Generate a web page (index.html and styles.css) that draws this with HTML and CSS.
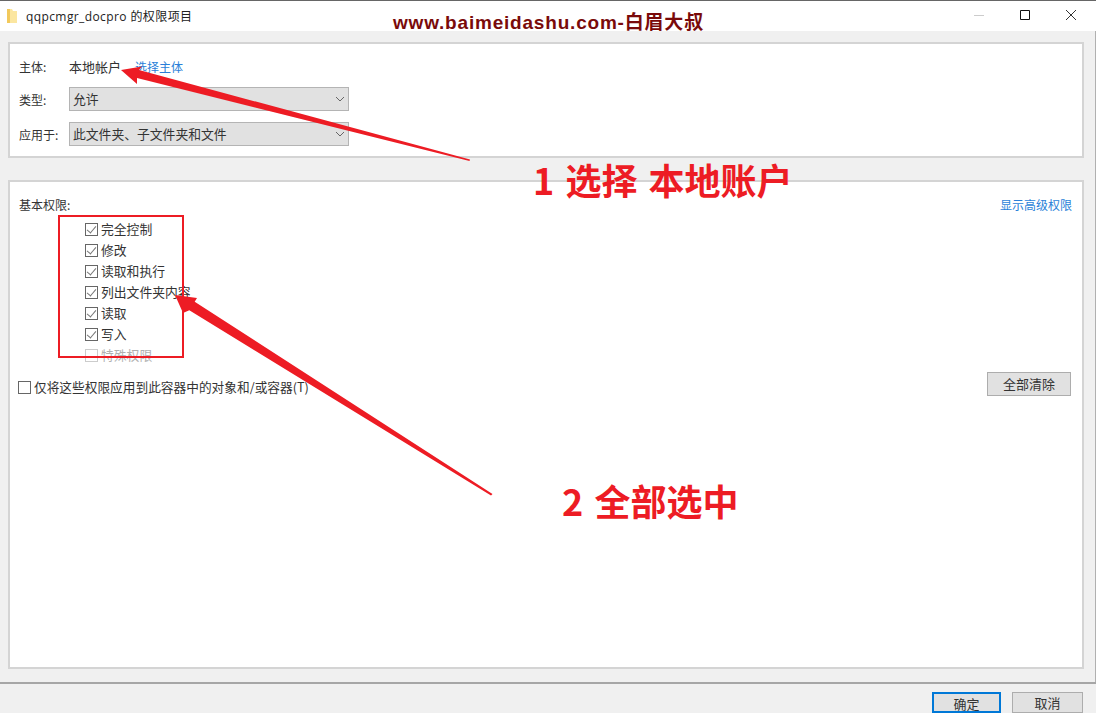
FILE: index.html
```html
<!DOCTYPE html>
<html lang="zh-CN">
<head>
  <meta charset="UTF-8" />
  <title>qqpcmgr_docpro 的权限项目</title>
  <link rel="stylesheet" href="styles.css">
</head>
<body>
  <div class="titlebar">
    <svg class="folder-icon" width="10" height="14" viewBox="0 0 10 14">
      <path d="M0 0h5l1 2h4v12H0z" fill="#fbe6a0"/>
      <path d="M0 0h3v14H0z" fill="#f2c95c"/>
    </svg>
    <span class="title-text">qqpcmgr_docpro 的权限项目</span>
    <div class="window-controls">
      <svg width="46" height="30" viewBox="0 0 46 30"><path d="M18 14.500h10" stroke="#ccc" fill="none"/></svg>
      <svg width="46" height="30" viewBox="0 0 46 30"><path d="M18.500 9.500h9v9h-9z" stroke="#111" fill="none"/></svg>
      <svg width="46" height="30" viewBox="0 0 46 30"><path d="M18 9l10 10M28 9L18 19" stroke="#333" fill="none"/></svg>
    </div>
  </div>

  <div class="main">
    <div class="panel panel-top">
      <div class="field-row field-row-first">
        <span class="field-label">主体:</span>
        <span class="principal">本地帐户</span>
        <a class="link">选择主体</a>
      </div>
      <div class="field-row">
        <span class="field-label">类型:</span>
        <div class="select"><span class="select-value">允许</span><svg class="chevron" width="10" height="6" viewBox="0 0 10 6"><path d="M1 1l4 4 4-4" stroke="#666" fill="none"/></svg></div>
      </div>
      <div class="field-row">
        <span class="field-label">应用于:</span>
        <div class="select"><span class="select-value">此文件夹、子文件夹和文件</span><svg class="chevron" width="10" height="6" viewBox="0 0 10 6"><path d="M1 1l4 4 4-4" stroke="#666" fill="none"/></svg></div>
      </div>
    </div>

    <div class="panel panel-perms">
      <div class="perm-head">
        <span>基本权限:</span>
        <a class="link">显示高级权限</a>
      </div>
      <ul class="perm-list">
        <li><span class="box checked"></span>完全控制</li>
        <li><span class="box checked"></span>修改</li>
        <li><span class="box checked"></span>读取和执行</li>
        <li><span class="box checked"></span>列出文件夹内容</li>
        <li><span class="box checked"></span>读取</li>
        <li><span class="box checked"></span>写入</li>
        <li class="disabled"><span class="box"></span>特殊权限</li>
      </ul>
      <div class="perm-foot">
        <label class="apply-only"><span class="box"></span>仅将这些权限应用到此容器中的对象和/或容器(T)</label>
        <button class="btn btn-clear">全部清除</button>
      </div>
    </div>
  </div>

  <div class="footer">
    <button class="btn btn-ok">确定</button>
    <button class="btn btn-cancel">取消</button>
  </div>

  <!-- annotations drawn on top of the dialog -->
  <div class="watermark">www.baimeidashu.com-白眉大叔</div>
  <div class="red-box"></div>
  <svg class="arrows" width="1096" height="713" viewBox="0 0 1096 713">
    <path d="M121 70L142 66.500 139 70 470 159.500 469.500 161 137 78 137 84z" fill="#ed1c24"/>
    <path d="M175 295L197 298 194.700 301.800 492.500 494 491 495.500 189.300 310.200 183 313z" fill="#ed1c24"/>
  </svg>
  <div class="note note-one">1 选择 本地账户</div>
  <div class="note note-two">2 全部选中</div>
</body>
</html>
```

FILE: styles.css
```css
* {
  box-sizing: border-box;
}
body {
  margin: 0;
  width: 1096px;
  height: 713px;
  overflow: hidden;
  position: relative;
  display: flex;
  flex-direction: column;
  background-color: #f0f0f0;
  color: #333;
  font-family: "Noto Sans CJK SC", "Noto Sans", sans-serif;
  font-size: 12px;
}
.titlebar {
  height: 31px;
  flex-shrink: 0;
  display: flex;
  align-items: center;
  background-color: #fff;
  border-top: 1px solid #666;
  padding-left: 7px;
}
.folder-icon {
  margin-right: 9px;
}
.title-text {
  font-family: "Open Sans", "Noto Sans CJK SC", sans-serif;
  font-size: 12px;
  letter-spacing: 0.4px;
  color: #222;
}
.window-controls {
  margin-left: auto;
  display: flex;
  margin-right: 2px;
}
.main {
  flex: 1;
  display: flex;
  flex-direction: column;
  gap: 22px;
  padding: 11px 11px 13px 8px;
  border-right: 1px solid #b0b0b0;
}
.panel {
  background-color: #fff;
  border: 2px solid #d4d4d4;
}
.panel-top {
  height: 116px;
  padding: 13px 0 0 9px;
  display: flex;
  flex-direction: column;
  gap: 11px;
}
.field-row {
  display: flex;
  align-items: center;
  height: 24px;
  flex-shrink: 0;
}
.field-row-first {
  height: 19px;
}
.field-label {
  width: 50px;
}
.principal {
  font-size: 13px;
  margin-right: 14px;
}
.link {
  color: #2a7fd8;
}
.select {
  width: 280px;
  height: 24px;
  display: flex;
  align-items: center;
  justify-content: space-between;
  padding: 0 3px 0 3px;
  background-color: #e1e1e1;
  border: 1px solid #b4b4b4;
  font-size: 12.800px;
}
.select-value {
  padding-bottom: 2px;
}
.panel-perms {
  flex: 1;
  padding: 12px 10px 0 9px;
}
.perm-head {
  display: flex;
  justify-content: space-between;
  line-height: 22px;
}
.perm-list {
  list-style: none;
  margin: 2px 0 0;
  padding: 0 0 0 66px;
}
.perm-list li {
  display: flex;
  align-items: center;
  height: 21px;
  font-size: 12.800px;
}
.perm-list li.disabled {
  color: #b0b0b0;
}
.box {
  width: 13px;
  height: 13px;
  margin-right: 3px;
  flex-shrink: 0;
  background-color: #fff;
  border: 1px solid #666;
  position: relative;
  top: 1px;
}
.box.checked::after {
  content: "";
  position: absolute;
  left: 3px;
  top: 0;
  width: 4px;
  height: 8px;
  border: solid #777;
  border-width: 0 1px 1px 0;
  transform: rotate(40deg);
}
.disabled .box {
  border-color: #ccc;
}
.perm-foot {
  display: flex;
  justify-content: space-between;
  align-items: flex-start;
  margin-top: 7px;
}
.apply-only {
  display: flex;
  align-items: center;
  margin-top: 5px;
  font-size: 12.700px;
}
.apply-only .box {
  margin-left: -1px;
  margin-right: 3px;
}
.btn {
  height: 21px;
  padding: 0 0 2px;
  background-color: #e1e1e1;
  border: 1px solid #adadad;
  font-family: inherit;
  font-size: 13px;
  color: #333;
}
.btn-clear {
  width: 84px;
  height: 24px;
  margin-right: 1px;
}
.footer {
  height: 31px;
  flex-shrink: 0;
  display: flex;
  justify-content: flex-end;
  gap: 11px;
  padding: 8px 13px 0 0;
  border-top: 2px solid #a6a6a6;
}
.btn-ok {
  width: 69px;
  border: 2px solid #0078d7;
}
.btn-cancel {
  width: 71px;
}
.watermark {
  position: absolute;
  left: 393px;
  top: 11px;
  color: #7a0a0a;
  font-family: "Liberation Sans", "Noto Sans CJK SC", sans-serif;
  font-size: 19px;
  line-height: 24px;
  letter-spacing: 0.8px;
  font-weight: bold;
  white-space: nowrap;
}
.red-box {
  position: absolute;
  left: 58px;
  top: 215px;
  width: 126px;
  height: 143px;
  border: 2px solid #ed1c24;
}
.arrows {
  position: absolute;
  left: 0;
  top: 0;
}
.note {
  position: absolute;
  color: #ed1c24;
  font-size: 36px;
  font-weight: bold;
  line-height: 40px;
  word-spacing: 3px;
  white-space: nowrap;
}
.note-one {
  left: 533px;
  top: 159px;
}
.note-two {
  left: 562px;
  top: 480px;
}
```
